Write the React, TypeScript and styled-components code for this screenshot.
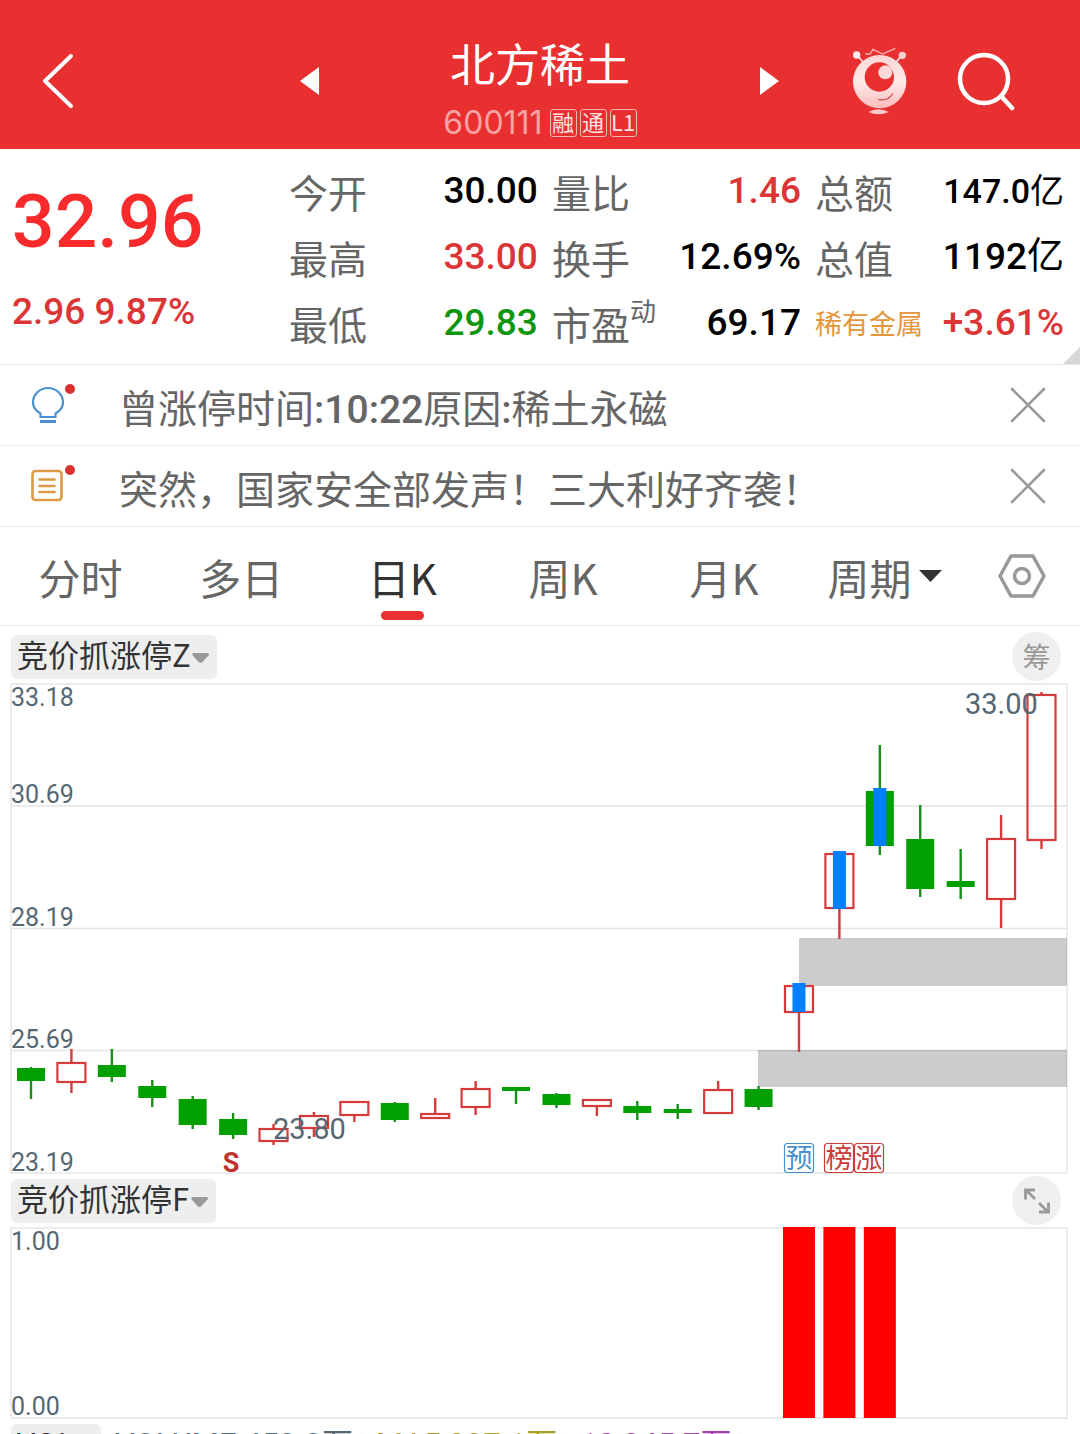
import React, { useState } from "react";
import styled, { createGlobalStyle } from "styled-components";

const cjk = `"Noto Sans CJK SC", sans-serif`;
const numeric = `Roboto, "Noto Sans CJK SC", sans-serif`;

const color = {
  brand: "#e83030",
  up: "#dc3535",
  price: "#f72b2b",
  down: "#0f960f",
  ink: "#000",
  label: "#666",
  dark: "#333",
  muted: "#999",
  line: "#ebebeb",
  axis: "#566774",
  orange: "#e6963a",
  blue: "#4a90d0",
};

const GlobalStyle = createGlobalStyle`
  *, *::before, *::after { box-sizing: border-box; }
  body { margin: 0; background: #fff; font-family: ${cjk}; }
  button, select { font: inherit; color: inherit; background: none; border: 0; margin: 0; padding: 0; }
  button { cursor: pointer; }
  svg { display: block; }
`;

const Page = styled.div`
  height: 100vh;
  overflow: hidden;
  background: #fff;
`;

/* ---------- header ---------- */

const Header = styled.header`
  display: grid;
  grid-template-columns: 5fr 8fr 5fr;
  align-items: center;
  height: 149px;
  padding-top: 13px;
  background: ${color.brand};
  color: #fff;
`;

const HeaderSide = styled.div<{ $indent: number }>`
  display: flex;
  align-items: center;
  gap: 36px;
  padding-left: ${(p) => p.$indent}px;
`;

const StockSwitcher = styled.nav`
  display: flex;
  align-items: center;
  justify-content: space-between;
`;

const StockHeading = styled.div`
  display: flex;
  flex-direction: column;
  align-items: center;
  gap: 20px;
  padding-top: 11px;
`;

const StockName = styled.h1`
  margin: 0;
  font-size: 45px;
  font-weight: 400;
  line-height: 52px;
`;

const StockMeta = styled.div`
  display: flex;
  align-items: center;
  gap: 3px;
`;

const StockCode = styled.span`
  margin-right: 4px;
  font-family: Inter, sans-serif;
  font-size: 32px;
  font-weight: 400;
  line-height: 28px;
  color: #f6a3a3;
`;

const MetaTag = styled.span`
  display: flex;
  align-items: center;
  justify-content: center;
  width: 27px;
  height: 28px;
  padding-bottom: 3px;
  border: 1px solid #f6b4b4;
  border-radius: 3px;
  font-size: 22px;
  line-height: 22px;
  color: #fde3e3;
`;

/* ---------- quote ---------- */

const Quote = styled.section`
  position: relative;
  display: grid;
  grid-template-columns: 19fr 18fr 18fr 18fr;
  column-gap: 14px;
  padding: 9px 16px 8px 12px;
  border-bottom: 1px solid ${color.line};
  font-family: ${numeric};
`;

const PriceBlock = styled.div`
  padding-top: 13px;
  font-weight: 500;
`;

const Price = styled.div`
  font-size: 75px;
  line-height: 100px;
  color: ${color.price};
`;

const Change = styled.div`
  font-size: 37px;
  line-height: 82px;
  color: ${color.up};
`;

const StatColumn = styled.dl`
  display: grid;
  grid-auto-rows: 66px;
  margin: 0;
`;

const Stat = styled.div`
  display: flex;
  align-items: center;
  justify-content: space-between;
  white-space: nowrap;
`;

const StatLabel = styled.dt<{ $accent?: boolean }>`
  display: flex;
  font-family: ${cjk};
  font-size: ${(p) => (p.$accent ? 27 : 39)}px;
  line-height: 64px;
  color: ${(p) => (p.$accent ? color.orange : color.label)};
`;

const StatNote = styled.sup`
  font-size: 26px;
  line-height: 38px;
  vertical-align: top;
`;

const StatValue = styled.dd<{ $tone: string; $compact?: boolean }>`
  margin: 0;
  font-size: ${(p) => (p.$compact ? 34 : 37)}px;
  font-weight: 500;
  line-height: 66px;
  color: ${(p) => p.$tone};
`;

const Unit = styled.span`
  font-weight: 400;
`;

const CornerFold = styled.span`
  position: absolute;
  right: 0;
  bottom: 0;
  border-bottom: 17px solid #d8d8d8;
  border-left: 17px solid transparent;
`;

/* ---------- notices ---------- */

const NoticeRow = styled.div`
  display: flex;
  align-items: center;
  height: 81px;
  padding: 0 34px 0 30px;
  border-bottom: 1px solid ${color.line};
`;

const NoticeIcon = styled.span`
  position: relative;
  width: 36px;
  margin-right: 53px;
`;

const UnreadDot = styled.span`
  position: absolute;
  top: -2px;
  right: -9px;
  width: 10px;
  height: 10px;
  border-radius: 50%;
  background: #dc3030;
`;

const NoticeLink = styled.a`
  flex: 1;
  padding-top: 10px;
  font-family: ${numeric};
  font-size: 39px;
  line-height: 60px;
  white-space: nowrap;
  color: ${color.label};
  text-decoration: none;
`;

const Figure = styled.span`
  font-weight: 500;
`;

/* ---------- period tabs ---------- */

const TabBar = styled.nav`
  display: grid;
  grid-template-columns: repeat(6, 10fr) 7fr;
  justify-items: center;
  height: 99px;
  padding-right: 2px;
  border-bottom: 1px solid ${color.line};
`;

const Tab = styled.button<{ $active: boolean }>`
  display: flex;
  flex-direction: column;
  align-items: center;
  justify-content: flex-start;
  gap: 2px;
  padding-top: 18px;
  font-size: 42px;
  line-height: 64px;
  color: ${(p) => (p.$active ? color.dark : color.label)};

  &::after {
    content: "";
    width: 43px;
    height: 9px;
    border-radius: 5px;
    background: ${(p) => (p.$active ? color.brand : "transparent")};
  }
`;

const PeriodField = styled.label`
  display: flex;
  align-items: center;
  gap: 7px;
  height: 64px;
  margin-top: 17px;
  font-size: 42px;
  color: ${color.label};
`;

const BareSelect = styled.select`
  appearance: none;
  line-height: inherit;
  outline: none;
`;

const IconButton = styled.button`
  display: flex;
  align-items: center;
  justify-content: center;
`;

/* ---------- charts ---------- */

const Charts = styled.main`
  padding: 4px 12px 0 10px;
`;

const IndicatorBar = styled.div`
  display: flex;
  align-items: center;
  height: 53px;
  padding: 0 7px 0 1px;
`;

const IndicatorPill = styled.label`
  display: flex;
  align-items: center;
  gap: 1px;
  height: 44px;
  padding: 0 7px 0 6px;
  border-radius: 6px;
  background: #eee;
  font-size: 31px;
  line-height: 42px;
  color: ${color.dark};

  & > select {
    padding-bottom: 5px;
  }
`;

const RoundButton = styled.button`
  display: flex;
  align-items: center;
  justify-content: center;
  width: 49px;
  height: 49px;
  margin-left: auto;
  border-radius: 50%;
  background: #efefef;
  font-size: 28px;
  line-height: 49px;
  color: ${color.muted};
`;

const Readings = styled.div`
  display: flex;
  gap: 8px;
  margin-left: 14px;
  padding-bottom: 2px;
  font-family: ${numeric};
  font-size: 31px;
  line-height: 42px;
  white-space: nowrap;
`;

const Reading = styled.span<{ $tone: string }>`
  display: flex;
  align-items: center;
  gap: 2px;
  color: ${(p) => p.$tone};
`;

const ChartSvg = styled.svg`
  width: 100%;
  height: auto;
  overflow: visible;
  font-family: ${numeric};
`;

/* ---------- data ---------- */

type StatItem = {
  label: string;
  value: string;
  tone: string;
  unit?: string;
  note?: string;
  accent?: boolean;
  compact?: boolean;
};

const stats: StatItem[][] = [
  [
    { label: "今开", value: "30.00", tone: color.ink },
    { label: "最高", value: "33.00", tone: color.up },
    { label: "最低", value: "29.83", tone: color.down },
  ],
  [
    { label: "量比", value: "1.46", tone: color.up },
    { label: "换手", value: "12.69%", tone: color.ink },
    { label: "市盈", note: "动", value: "69.17", tone: color.ink },
  ],
  [
    { label: "总额", value: "147.0", unit: "亿", tone: color.ink, compact: true },
    { label: "总值", value: "1192", unit: "亿", tone: color.ink },
    { label: "稀有金属", value: "+3.61%", tone: color.up, accent: true },
  ],
];

const tabs = ["分时", "多日", "日K", "周K", "月K"];

/* kind, body top, body bottom, wick top, wick bottom, signal top, signal bottom */
type Candle = ["up" | "down", number, number, number, number, number?, number?];

const candles: Candle[] = [
  ["down", 385, 398, 384, 416],
  ["up", 379, 400, 366, 410],
  ["down", 382, 394, 366, 399],
  ["down", 403, 415, 397, 424],
  ["down", 416, 442, 413, 446],
  ["down", 436, 452, 430, 456],
  ["up", 445, 459, 441, 462],
  ["up", 432, 446, 429, 454],
  ["up", 418, 433, 418, 439],
  ["down", 420, 437, 419, 439],
  ["up", 430, 436, 415, 436],
  ["up", 405, 425, 398, 432],
  ["down", 404, 408, 404, 421],
  ["down", 411, 422, 410, 425],
  ["up", 416, 424, 416, 433],
  ["down", 423, 430, 418, 437],
  ["down", 426, 430, 421, 436],
  ["up", 406, 431, 398, 431],
  ["down", 406, 424, 403, 427],
  ["up", 302, 330, 302, 369, 300, 329],
  ["up", 170, 226, 170, 256, 168, 226],
  ["down", 108, 163, 62, 172, 105, 163],
  ["down", 156, 206, 122, 214],
  ["down", 198, 204, 166, 216],
  ["up", 155, 217, 132, 245],
  ["up", 11, 158, 9, 166],
];

const candleX = (i: number) => 21 + i * 40.42;

const priceAxis: [string, number][] = [
  ["33.18", 23],
  ["30.69", 120],
  ["28.19", 243],
  ["25.69", 365],
  ["23.19", 488],
];

const eventMarks: [string, number, string][] = [
  ["预", 789, color.blue],
  ["榜", 829, "#c83c3a"],
  ["涨", 859, "#c83c3a"],
];

/* ---------- icons ---------- */

const BackIcon = () => (
  <svg width="34" height="58" viewBox="0 0 34 58" fill="none" stroke="#fff" strokeWidth="4" strokeLinecap="round" strokeLinejoin="round">
    <path d="M30 4 4 29l26 25" />
  </svg>
);

const SideArrow = ({ flip }: { flip?: boolean }) => (
  <svg width="20" height="28" viewBox="0 0 20 28" fill="#fff">
    <path d={flip ? "M0 0v28L19 14z" : "M19 0v28L0 14z"} />
  </svg>
);

const RobotIcon = () => (
  <svg width="80" height="80" viewBox="0 0 240 240" fill="none">
    <defs>
      <linearGradient id="robotBody" x1="0" y1="0" x2="0" y2="1">
        <stop offset="0" stopColor="#fdd5d5" />
        <stop offset=".5" stopColor="#feeaea" />
        <stop offset="1" stopColor="#fcbcbc" />
      </linearGradient>
    </defs>
    <path d="M76 39h14l9-14 28 14 39-17" stroke="#f9b5b5" strokeWidth="4" />
    <path d="M52 44l20 22M185 44l-19 22" stroke="#fde3e3" strokeWidth="5" />
    <circle cx="50" cy="42" r="11" fill="#fff0f0" />
    <circle cx="187" cy="43" r="11" fill="#fbd0d0" />
    <circle cx="119" cy="122" r="80" fill="url(#robotBody)" />
    <circle cx="118" cy="108" r="44" fill={color.brand} />
    <circle cx="136" cy="94" r="21" fill="#fdd9d9" />
    <path d="M116 176q30 4 41-17" stroke="#dc4545" strokeWidth="4" strokeLinecap="round" />
    <path d="M85 213q30-16 61 0-30 14-61 0z" fill="#fbcaca" />
  </svg>
);

const SearchIcon = () => (
  <svg width="60" height="60" viewBox="0 0 60 60" fill="none" stroke="#fff" strokeWidth="4.5" strokeLinecap="round">
    <circle cx="28" cy="28" r="24" />
    <path d="M45 45l11 12" />
  </svg>
);

const BulbIcon = () => (
  <svg width="36" height="38" viewBox="0 0 36 38" fill="none" stroke={color.blue} strokeWidth="2.2">
    <path d="M10.500 31v-3.500C6 25 3 21 3 16.500a15 14.500 0 0 1 30 0C33 21 30 25 25.500 27.500V31z" />
    <path d="M10 35.500h16" strokeWidth="3" />
  </svg>
);

const NewsIcon = () => (
  <svg width="36" height="38" viewBox="0 0 36 38" fill="none" stroke="#dd9a45" strokeWidth="2.600" strokeLinecap="round">
    <rect x="2.500" y="4" width="29" height="29" rx="3" />
    <path d="M9.500 12.500h15M9.500 19h15M9.500 25h15" />
  </svg>
);

const CloseIcon = () => (
  <svg width="36" height="36" viewBox="0 0 36 36" fill="none" stroke={color.muted} strokeWidth="2.600" strokeLinecap="round">
    <path d="M2 2l32 32M34 2 2 34" />
  </svg>
);

const Caret = () => (
  <svg width="23" height="12" viewBox="0 0 23 12" fill={color.dark}>
    <path d="M0 0h23L11.500 12z" />
  </svg>
);

const SoftCaret = () => (
  <svg width="18" height="16" viewBox="0 0 18 16" fill={color.muted}>
    <path d="M2 4h13q3 0 1.500 2.500L10.500 13q-2 2-4 0L.7 6.500Q-.5 4 2 4z" />
  </svg>
);

const SettingsIcon = () => (
  <svg width="48" height="46" viewBox="0 0 48 46" fill="none" stroke={color.muted} strokeWidth="3.500" strokeLinejoin="round">
    <path d="M13 3h22l11 20-11 20H13L2 23z" />
    <circle cx="24" cy="23" r="7.500" />
  </svg>
);

const ExpandIcon = () => (
  <svg width="28" height="28" viewBox="0 0 28 28" fill="none" stroke={color.muted} strokeWidth="2.800">
    <path d="M2.500 12.500V3H12M3 3l9 9M25.500 15.500V25H16M25 25l-9-9" />
  </svg>
);

const UpArrow = () => (
  <svg width="13" height="24" viewBox="0 0 13 24" fill="none" stroke={color.up} strokeWidth="3">
    <path d="M6.500 24V3M1 9l5.500-6L12 9" />
  </svg>
);

/* ---------- chart drawings ---------- */

const CandleShape = ({ candle, x }: { candle: Candle; x: number }) => {
  const [kind, top, bottom, high, low, signalTop, signalBottom] = candle;
  const up = kind === "up";
  const tone = up ? "#d63a3a" : "#1b8f1b";
  return (
    <g>
      <path d={`M${x} ${high}V${top}M${x} ${bottom}V${low}`} stroke={tone} strokeWidth="2.4" />
      {up ? (
        <rect x={x - 14} y={top + 1} width="28" height={bottom - top - 2} fill="none" stroke={tone} strokeWidth="2.2" />
      ) : (
        <rect x={x - 14} y={top} width="28" height={bottom - top} fill="#00a000" />
      )}
      {signalTop !== undefined && signalBottom !== undefined && (
        <rect x={x - 6.5} y={signalTop} width="13" height={signalBottom - signalTop} fill="#0080ff" />
      )}
    </g>
  );
};

const PriceChart = () => (
  <ChartSvg viewBox="0 0 1058 491" role="img" aria-label="日K线图">
    <g stroke="#e4e4e4" strokeWidth="1.4" fill="none">
      <rect x="1" y="1" width="1056" height="489" />
      <path d="M1 123h1056M1 245.500h1056M1 367.500h1056" />
    </g>
    <g fill="#000" fillOpacity=".2">
      <rect x="789" y="255" width="268" height="48" />
      <rect x="748" y="367" width="309" height="37" />
    </g>
    {candles.map((candle, i) => (
      <CandleShape key={i} candle={candle} x={candleX(i)} />
    ))}
    <g fontSize="25" fill={color.axis}>
      {priceAxis.map(([text, y]) => (
        <text key={text} x="1" y={y}>{text}</text>
      ))}
    </g>
    <g fontSize="29" fill={color.axis}>
      <text x="955" y="31">33.00</text>
      <text x="263" y="456">23.80</text>
    </g>
    <text x="221" y="489" textAnchor="middle" fontSize="27" fontWeight="700" fill="#bd3330">S</text>
    {eventMarks.map(([text, x, tone]) => (
      <g key={text}>
        <rect x={x - 14.5} y="460.500" width="29" height="29" rx="3" fill="#fff" stroke={tone} strokeWidth="1.2" />
        <text x={x} y="485" textAnchor="middle" fontSize="27" fill={tone}>{text}</text>
      </g>
    ))}
  </ChartSvg>
);

const SignalChart = () => (
  <ChartSvg viewBox="0 0 1058 192" role="img" aria-label="竞价抓涨停F">
    <rect x="1" y="1" width="1056" height="190" stroke="#e4e4e4" strokeWidth="1.4" fill="none" />
    {[19, 20, 21].map((i) => (
      <rect key={i} x={candleX(i) - 16} y="0" width="32" height="191" fill="#f00" />
    ))}
    <g fontSize="25" fill={color.axis}>
      <text x="1" y="23">1.00</text>
      <text x="1" y="188">0.00</text>
    </g>
  </ChartSvg>
);

const Indicator = ({ name, label }: { name: string; label: string }) => (
  <IndicatorPill>
    <BareSelect aria-label={label} defaultValue={name}>
      <option value={name}>{name}</option>
    </BareSelect>
    <SoftCaret />
  </IndicatorPill>
);

export default function App() {
  const [activeTab, setActiveTab] = useState("日K");

  return (
    <Page>
      <GlobalStyle />
      <Header>
        <HeaderSide $indent={41}>
          <IconButton aria-label="返回"><BackIcon /></IconButton>
        </HeaderSide>
        <StockSwitcher>
          <IconButton aria-label="上一只"><SideArrow /></IconButton>
          <StockHeading>
            <StockName>北方稀土</StockName>
            <StockMeta>
              <StockCode>600111</StockCode>
              <MetaTag>融</MetaTag>
              <MetaTag>通</MetaTag>
              <MetaTag>L1</MetaTag>
            </StockMeta>
          </StockHeading>
          <IconButton aria-label="下一只"><SideArrow flip /></IconButton>
        </StockSwitcher>
        <HeaderSide $indent={60}>
          <IconButton aria-label="智能助手"><RobotIcon /></IconButton>
          <IconButton aria-label="搜索"><SearchIcon /></IconButton>
        </HeaderSide>
      </Header>

      <Quote>
        <PriceBlock>
          <Price>32.96</Price>
          <Change>2.96 9.87%</Change>
        </PriceBlock>
        {stats.map((column, i) => (
          <StatColumn key={i}>
            {column.map((item) => (
              <Stat key={item.label}>
                <StatLabel $accent={item.accent}>
                  {item.label}
                  {item.note && <StatNote>{item.note}</StatNote>}
                </StatLabel>
                <StatValue $tone={item.tone} $compact={item.compact}>
                  {item.value}
                  {item.unit && <Unit>{item.unit}</Unit>}
                </StatValue>
              </Stat>
            ))}
          </StatColumn>
        ))}
        <CornerFold />
      </Quote>

      <NoticeRow>
        <NoticeIcon><BulbIcon /><UnreadDot /></NoticeIcon>
        <NoticeLink href="#limit-up">
          曾涨停时间<Figure>:10:22</Figure>原因<Figure>:</Figure>稀土永磁
        </NoticeLink>
        <IconButton aria-label="关闭"><CloseIcon /></IconButton>
      </NoticeRow>
      <NoticeRow>
        <NoticeIcon><NewsIcon /><UnreadDot /></NoticeIcon>
        <NoticeLink href="#news">突然，国家安全部发声！三大利好齐袭！</NoticeLink>
        <IconButton aria-label="关闭"><CloseIcon /></IconButton>
      </NoticeRow>

      <TabBar>
        {tabs.map((tab) => (
          <Tab key={tab} $active={tab === activeTab} onClick={() => setActiveTab(tab)}>{tab}</Tab>
        ))}
        <PeriodField>
          <BareSelect aria-label="周期" defaultValue="周期">
            <option value="周期">周期</option>
          </BareSelect>
          <Caret />
        </PeriodField>
        <IconButton aria-label="设置"><SettingsIcon /></IconButton>
      </TabBar>

      <Charts>
        <IndicatorBar>
          <Indicator name="竞价抓涨停Z" label="主图指标" />
          <RoundButton aria-label="筹码">筹</RoundButton>
        </IndicatorBar>
        <PriceChart />
        <IndicatorBar>
          <Indicator name="竞价抓涨停F" label="副图指标" />
          <RoundButton aria-label="放大"><ExpandIcon /></RoundButton>
        </IndicatorBar>
        <SignalChart />
        <IndicatorBar>
          <Indicator name="VOL" label="成交量指标" />
          <Readings>
            <Reading $tone={color.axis}>VOLUME:459.3万<UpArrow /></Reading>
            <Reading $tone="#a8a020">MA5:997.1万<UpArrow /></Reading>
            <Reading $tone="#a040a8">10:845.7万<UpArrow /></Reading>
          </Readings>
        </IndicatorBar>
      </Charts>
    </Page>
  );
}
